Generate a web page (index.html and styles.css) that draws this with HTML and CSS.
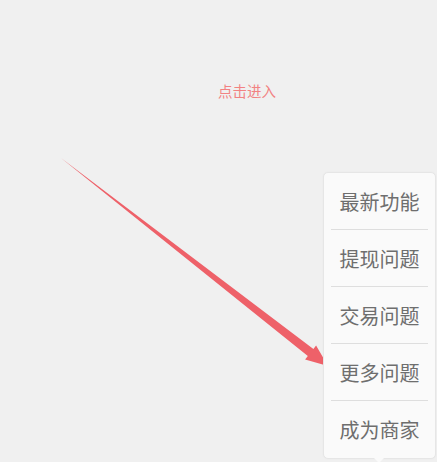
FILE: index.html
```html
<!DOCTYPE html>
<html>
<head>
<meta charset="utf-8">
<link rel="stylesheet" href="styles.css">
</head>
<body>
<div class="page">
  <p class="hint">点击进入</p>
  <svg class="arrow" width="437" height="462" viewBox="0 0 437 462">
    <polygon points="61,158 313.4,349 316.1,345.4 328,366 305.1,359.6 307.8,356.1" fill="#ee6169"/>
  </svg>
  <ul class="menu">
    <li class="item">最新功能</li>
    <li class="item">提现问题</li>
    <li class="item">交易问题</li>
    <li class="item">更多问题</li>
    <li class="item">成为商家</li>
  </ul>
</div>
</body>
</html>
```
FILE: styles.css
```css
html, body {
  margin: 0;
  padding: 0;
  background: #f0f0f0;
  font-family: "Noto Sans CJK SC", "Noto Sans", sans-serif;
}
.page {
  position: relative;
  width: 437px;
  height: 462px;
  overflow: hidden;
}
.hint {
  margin: 0;
  padding: 81px 0 0 218px;
  font-size: 14.5px;
  line-height: 20px;
  color: #f28282;
}
.arrow {
  position: absolute;
  left: 0;
  top: 0;
}
.menu {
  position: absolute;
  left: 323px;
  top: 172px;
  width: 113px;
  height: 287px;
  margin: 0;
  padding: 0 7px;
  box-sizing: border-box;
  list-style: none;
  background: #fafafa;
  border: 1px solid #e6e6e6;
  border-radius: 5px;
  box-shadow: 0 0 2px rgba(0,0,0,0.04);
}
.menu::after {
  content: "";
  position: absolute;
  left: 50px;
  bottom: -5px;
  width: 0;
  height: 0;
  border-left: 5px solid transparent;
  border-right: 5px solid transparent;
  border-top: 5px solid #fafafa;
}
.item {
  height: 57px;
  display: flex;
  align-items: center;
  justify-content: center;
  font-size: 20px;
  color: #6e6e6e;
  border-bottom: 1px solid #dedede;
  box-sizing: border-box;
}
.item:last-child {
  border-bottom: none;
}
```
